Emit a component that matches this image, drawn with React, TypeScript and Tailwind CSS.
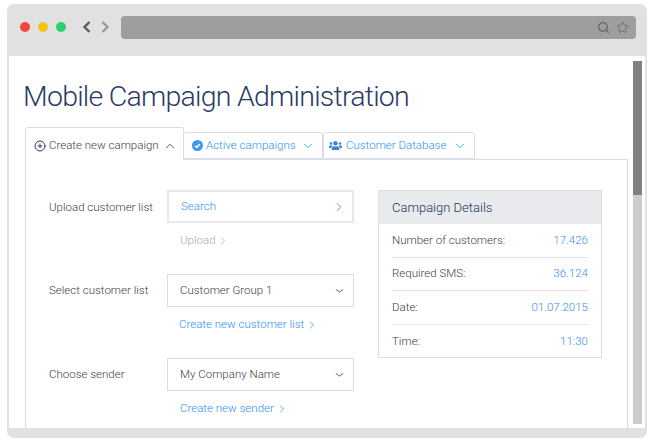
import React from "react";
import { ChevronRight, ChevronUp, ChevronDown, CirclePlus, Search, Star } from "lucide-react";
import { FaUsers } from "react-icons/fa";

const details = [
  { label: "Number of customers:", value: "17.426" },
  { label: "Required SMS:", value: "36.124" },
  { label: "Date:", value: "01.07.2015" },
  { label: "Time:", value: "11:30" },
];

// flat little arrow used in the select boxes
const SelectArrow = () => (
  <svg width="9" height="6" viewBox="0 0 9 6" className="text-[#666666]">
    <path d="M0.8 1.4 4.5 4 8.2 1.4" fill="none" stroke="currentColor" strokeWidth="1" />
  </svg>
);

const App: React.FC = () => {
  return (
    <div className="w-[654px] h-[442px] bg-white pt-[4px] pb-[4px] pl-[7px] pr-[7px] overflow-hidden font-['Roboto','Liberation_Sans',sans-serif] font-light text-[11.5px] text-[#3a3f45]">
      {/* browser window */}
      <div className="flex flex-col h-[434px] rounded-[7px] bg-[#e1e1e1]">
        {/* title bar */}
        <div className="flex items-center h-[52px] shrink-0 pl-[13px] pr-[11px] pb-[6px]">
          <span className="w-[10px] h-[10px] rounded-full bg-[#f0483e]" />
          <span className="w-[10px] h-[10px] rounded-full bg-[#f5c413] ml-[8px]" />
          <span className="w-[10px] h-[10px] rounded-full bg-[#2dd06f] ml-[8px]" />
          <svg width="9" height="12" viewBox="0 0 9 12" className="text-[#5c5c5c] ml-[16px]">
            <path d="M7.5 1 2.5 6 7.5 11" fill="none" stroke="currentColor" strokeWidth="2.4" />
          </svg>
          <svg width="9" height="12" viewBox="0 0 9 12" className="text-[#9a9a9a] ml-[10px]">
            <path d="M1.5 1 6.5 6 1.5 11" fill="none" stroke="currentColor" strokeWidth="2.4" />
          </svg>
          <div className="flex items-center justify-end flex-1 h-[23px] ml-[11px] rounded-[4px] bg-[#9e9e9e] pr-[7px] gap-[6px]">
            <Search size={13} strokeWidth={2.5} className="text-[#666666]" />
            <Star size={13} strokeWidth={1.5} className="text-[#666666]" />
          </div>
        </div>

        {/* page */}
        <div className="flex flex-1 min-h-0 ml-[2px] mr-[2px] bg-white">
          <div className="flex-1 min-w-0 overflow-hidden pl-[16px]">
            <h1 className="text-[28.5px] leading-[34px] font-light text-[#2a3b66] mt-[24px] -ml-[2px] tracking-[-0.75px] whitespace-nowrap">
              Mobile Campaign Administration
            </h1>

            {/* tabs */}
            <div className="flex items-end mt-[13px] h-[32px] relative z-10">
              <div className="flex items-center w-[159px] h-[33px] pl-[8px] bg-white border border-b-0 border-[#d9dce5] rounded-t-[3px] -mb-px pt-[4px]">
                <CirclePlus size={12} strokeWidth={2} className="text-[#2a3b66]" />
                <span className="ml-[3px] whitespace-nowrap">Create new campaign</span>
                <ChevronUp size={14} strokeWidth={1.5} className="ml-[4px]" />
              </div>
              <div className="flex items-center w-[139px] h-[27px] pl-[8px] border border-l-0 border-[#d9dce5] rounded-t-[3px] text-[#2f8ff5]">
                <svg width="11" height="11" viewBox="0 0 12 12">
                  <circle cx="6" cy="6" r="6" fill="#3f97f2" />
                  <path d="M3.4 6.2 5.3 8 8.6 4.3" fill="none" stroke="#ffffff" strokeWidth="1.6" />
                </svg>
                <span className="ml-[3px] whitespace-nowrap">Active campaigns</span>
                <ChevronDown size={14} strokeWidth={1.5} className="ml-[5px]" />
              </div>
              <div className="flex items-center w-[152px] h-[27px] pl-[5px] border border-[#d9dce5] rounded-t-[3px] text-[#2f8ff5]">
                <FaUsers size={13} className="text-[#3f7fd8]" />
                <span className="ml-[4px] whitespace-nowrap">Customer Database</span>
                <ChevronDown size={14} strokeWidth={1.5} className="ml-[7px]" />
              </div>
            </div>

            {/* tab panel */}
            <div className="flex h-[272px] w-[603px] border border-b-0 border-[#d9dce5] pl-[23px] pt-[30px]">
              {/* form */}
              <div className="w-[329px] shrink-0">
                <div className="flex h-[84px]">
                  <div className="w-[118px] shrink-0 pt-[9px]">Upload customer list</div>
                  <div className="w-[187px]">
                    <div className="flex items-center justify-between h-[33px] pt-[1px] pl-[12px] pr-[6px] border-2 border-[#e6e8ee] text-[#2f8ff5]">
                      <span>Search</span>
                      <ChevronRight size={14} strokeWidth={1.5} />
                    </div>
                    <div className="flex items-center pl-[13px] mt-[9px] text-[#a8a8a8]">
                      <span>Upload</span>
                      <ChevronRight size={12} strokeWidth={1.5} className="ml-[1px]" />
                    </div>
                  </div>
                </div>
                <div className="flex h-[84px]">
                  <div className="w-[118px] shrink-0 pt-[8px]">Select customer list</div>
                  <div className="w-[187px]">
                    <div className="flex items-center justify-between h-[33px] pl-[12px] pr-[9px] border border-[#d9dce5]">
                      <span>Customer Group 1</span>
                      <SelectArrow />
                    </div>
                    <div className="flex items-center pl-[12px] mt-[9px] text-[#2f8ff5]">
                      <span>Create new customer list</span>
                      <ChevronRight size={12} strokeWidth={1.5} className="ml-[2px]" />
                    </div>
                  </div>
                </div>
                <div className="flex h-[84px]">
                  <div className="w-[118px] shrink-0 pt-[8px]">Choose sender</div>
                  <div className="w-[187px]">
                    <div className="flex items-center justify-between h-[33px] pl-[12px] pr-[9px] border border-[#d9dce5]">
                      <span>My Company Name</span>
                      <SelectArrow />
                    </div>
                    <div className="flex items-center pl-[13px] mt-[9px] text-[#2f8ff5]">
                      <span>Create new sender</span>
                      <ChevronRight size={12} strokeWidth={1.5} className="ml-[2px]" />
                    </div>
                  </div>
                </div>
              </div>

              {/* campaign details */}
              <div className="w-[224px] h-[168px] shrink-0 border border-[#d9dce5]">
                <div className="flex items-center h-[33px] pl-[13px] bg-[#e8eaee] text-[13px] text-[#26365a]">Campaign Details</div>
                <div className="px-[13px]">
                  {details.map((row, i) => (
                    <div
                      key={row.label}
                      className={`flex items-center justify-between h-[33.5px] ${i < details.length - 1 ? "border-b border-[#e4e4e4]" : ""}`}
                    >
                      <span>{row.label}</span>
                      <span className="text-[#2f8ff5]">{row.value}</span>
                    </div>
                  ))}
                </div>
              </div>
            </div>
          </div>

          {/* scrollbar */}
          <div className="w-[17px] shrink-0 pt-[5px] pb-[4px] pl-[5px] pr-[3px]">
            <div className="h-full bg-[#cccccc]">
              <div className="h-[134px] bg-[#808080]" />
            </div>
          </div>
        </div>

        <div className="h-[10px] shrink-0" />
      </div>
    </div>
  );
};

export default App;
